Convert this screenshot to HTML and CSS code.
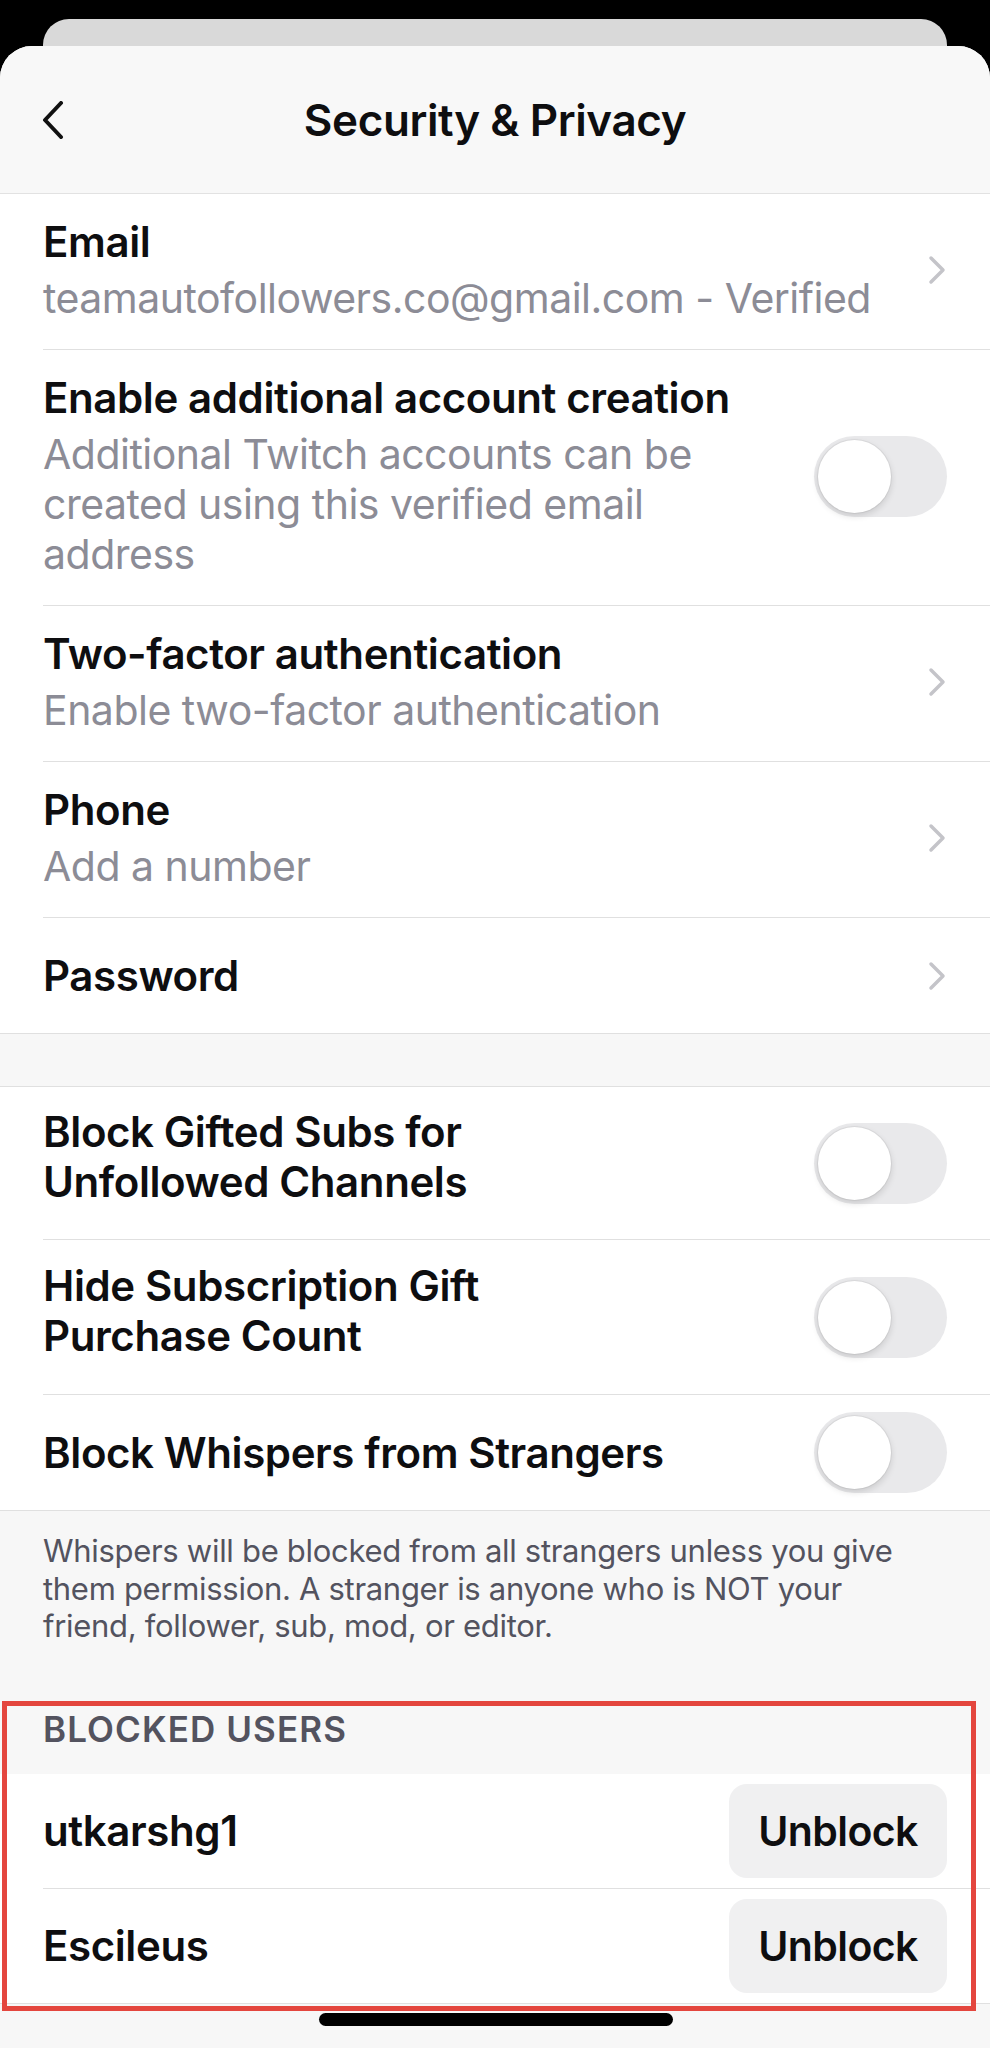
FILE: index.html
```html
<!DOCTYPE html>
<html lang="en">
<head>
<meta charset="utf-8">
<title>Security &amp; Privacy</title>
<link rel="stylesheet" href="styles.css">
</head>
<body>
<div class="screen">
  <div class="back-card"></div>
  <div class="sheet">
    <header class="header">
      <button class="back" aria-label="Back">
        <svg width="24" height="38" viewBox="0 0 24 38"><path d="M20 2 L4 19 L20 36" fill="none" stroke="#111" stroke-width="4" stroke-linecap="round" stroke-linejoin="round"/></svg>
      </button>
      <h1 class="title">Security &amp; Privacy</h1>
      <span class="spacer"></span>
    </header>

    <section class="group">
      <div class="row">
        <div class="text">
          <div class="label">Email</div>
          <div class="sub">teamautofollowers.co@gmail.com - Verified</div>
        </div>
        <svg class="chev" width="20" height="30" viewBox="0 0 20 30"><path d="M4 3 L16 15 L4 27" fill="none" stroke="#c4c4c9" stroke-width="3.5" stroke-linecap="round" stroke-linejoin="round"/></svg>
      </div>
      <div class="row">
        <div class="text">
          <div class="label">Enable additional account creation</div>
          <div class="sub narrow">Additional Twitch accounts can be created using this verified email address</div>
        </div>
        <span class="toggle"><span class="knob"></span></span>
      </div>
      <div class="row">
        <div class="text">
          <div class="label">Two-factor authentication</div>
          <div class="sub">Enable two-factor authentication</div>
        </div>
        <svg class="chev" width="20" height="30" viewBox="0 0 20 30"><path d="M4 3 L16 15 L4 27" fill="none" stroke="#c4c4c9" stroke-width="3.5" stroke-linecap="round" stroke-linejoin="round"/></svg>
      </div>
      <div class="row">
        <div class="text">
          <div class="label">Phone</div>
          <div class="sub">Add a number</div>
        </div>
        <svg class="chev" width="20" height="30" viewBox="0 0 20 30"><path d="M4 3 L16 15 L4 27" fill="none" stroke="#c4c4c9" stroke-width="3.5" stroke-linecap="round" stroke-linejoin="round"/></svg>
      </div>
      <div class="row single">
        <div class="text">
          <div class="label">Password</div>
        </div>
        <svg class="chev" width="20" height="30" viewBox="0 0 20 30"><path d="M4 3 L16 15 L4 27" fill="none" stroke="#c4c4c9" stroke-width="3.5" stroke-linecap="round" stroke-linejoin="round"/></svg>
      </div>
    </section>

    <div class="gap"></div>

    <section class="group">
      <div class="row switch-row">
        <div class="text">
          <div class="label wrap">Block Gifted Subs for Unfollowed Channels</div>
        </div>
        <span class="toggle"><span class="knob"></span></span>
      </div>
      <div class="row switch-row tall">
        <div class="text">
          <div class="label wrap">Hide Subscription Gift Purchase Count</div>
        </div>
        <span class="toggle"><span class="knob"></span></span>
      </div>
      <div class="row switch-row one-line">
        <div class="text">
          <div class="label">Block Whispers from Strangers</div>
        </div>
        <span class="toggle"><span class="knob"></span></span>
      </div>
    </section>

    <div class="footer">
      <p class="note">Whispers will be blocked from all strangers unless you give them permission. A stranger is anyone who is NOT your friend, follower, sub, mod, or editor.</p>
      <h2 class="section-title">BLOCKED USERS</h2>
    </div>

    <section class="group">
      <div class="row user-row">
        <div class="label">utkarshg1</div>
        <button class="unblock">Unblock</button>
      </div>
      <div class="row user-row">
        <div class="label">Escileus</div>
        <button class="unblock">Unblock</button>
      </div>
    </section>
  </div>
  <div class="highlight"></div>
  <div class="home-indicator"></div>
</div>
</body>
</html>
```

FILE: styles.css
```css
* { box-sizing: border-box; }
html, body { margin: 0; padding: 0; background: #000; }
body { font-family: Inter, "Noto Sans", "Liberation Sans", sans-serif; color: #0e0e10; }

.screen {
  position: relative;
  width: 990px;
  height: 2048px;
  overflow: hidden;
  background: #000;
  padding-top: 19px;
}

.back-card {
  margin: 0 43px;
  height: 27px;
  background: #d9d9d9;
  border-radius: 26px 26px 0 0;
}

.sheet {
  background: #f7f7f7;
  border-radius: 32px 32px 0 0;
  height: 2002px;
}

.header {
  height: 148px;
  display: grid;
  grid-template-columns: 120px 1fr 120px;
  align-items: center;
  border-bottom: 1px solid #e2e2e2;
  background: #f8f8f8;
  border-radius: 32px 32px 0 0;
}
.back {
  background: none;
  border: 0;
  padding: 0 0 0 41px;
  display: flex;
  align-items: center;
  height: 40px;
}
.title {
  margin: 0;
  text-align: center;
  font-size: 44px;
  font-weight: 600;
  letter-spacing: -0.4px;
  color: #0e0e10;
}

.group {
  background: #fff;
  border-bottom: 1px solid #e0e0e0;
}
.gap { height: 53px; border-bottom: 1px solid #e0e0e0; }

.row {
  margin-left: 43px;
  padding: 23px 43px 26px 0;
  display: flex;
  align-items: center;
  justify-content: space-between;
  border-bottom: 1px solid #e0e0e0;
}
.row:last-child { border-bottom: 0; }
.row.single { padding-top: 33px; padding-bottom: 32px; }
.row.switch-row { padding-top: 20px; padding-bottom: 32px; }
.row.switch-row.tall { padding-top: 21px; padding-bottom: 33px; }
.row.switch-row.one-line { padding-top: 17px; padding-bottom: 17px; }
.row.switch-row .toggle { margin-top: 12px; }
.row.switch-row.one-line .toggle { margin-top: 0; }

.text { flex: 1; min-width: 0; }
.label {
  font-size: 42px;
  line-height: 50px;
  font-weight: 600;
  letter-spacing: -0.4px;
  color: #0e0e10;
}
.label.wrap { max-width: 560px; }
.sub {
  margin-top: 6px;
  font-size: 41px;
  line-height: 50px;
  font-weight: 400;
  letter-spacing: -0.5px;
  color: #8c8c96;
}
.sub.narrow { max-width: 700px; }

.chev { flex: none; margin-left: 20px; }

.toggle {
  flex: none;
  position: relative;
  width: 133px;
  height: 81px;
  border-radius: 41px;
  background: #e9e9eb;
  margin-left: 20px;
}
.knob {
  position: absolute;
  left: 4px;
  top: 4px;
  width: 73px;
  height: 73px;
  border-radius: 50%;
  background: #fff;
  box-shadow: 0 3px 7px rgba(0,0,0,0.14), 0 0 0 1px rgba(0,0,0,0.05);
}

.footer {
  padding: 21px 57px 0 43px;
}
.note {
  margin: 0;
  font-size: 31px;
  line-height: 37.5px;
  letter-spacing: -0.3px;
  color: #53535f;
}
.section-title {
  margin: 64px 0 0;
  font-size: 35px;
  line-height: 40px;
  font-weight: 600;
  letter-spacing: 1.1px;
  color: #53535f;
  padding-bottom: 25px;
}

.row.user-row { padding-top: 10px; padding-bottom: 10px; }
.unblock {
  font-family: inherit;
  font-size: 41px;
  font-weight: 600;
  letter-spacing: -0.6px;
  color: #0e0e10;
  background: #f0f0f1;
  border: 0;
  border-radius: 18px;
  height: 94px;
  width: 218px;
  padding: 0;
}

.highlight {
  position: absolute;
  left: 2px;
  top: 1701px;
  width: 974px;
  height: 310px;
  border: 5px solid #e4463e;
  pointer-events: none;
}
.home-indicator {
  position: absolute;
  left: 319px;
  top: 2013px;
  width: 354px;
  height: 13px;
  border-radius: 7px;
  background: #000;
}
```
